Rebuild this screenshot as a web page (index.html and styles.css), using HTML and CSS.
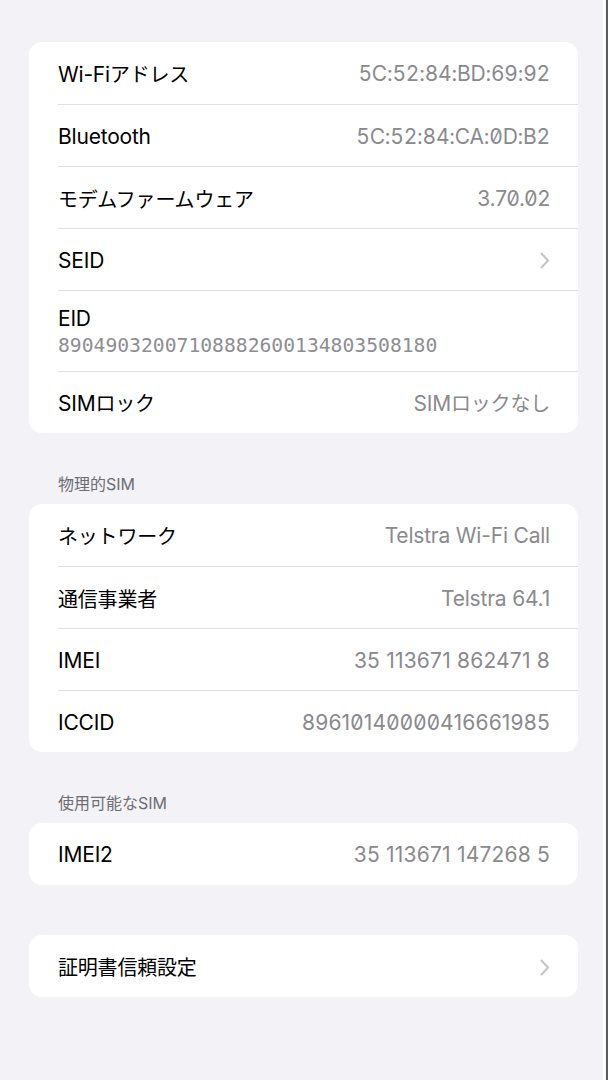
FILE: index.html
```html
<!DOCTYPE html>
<html lang="ja">
<head>
<meta charset="utf-8">
<title>情報</title>
<link rel="stylesheet" href="styles.css">
</head>
<body>
<div class="screen">
  <div class="card">
    <div class="row"><span class="label">Wi-Fi<span class="ja">アドレス</span></span><span class="value mac">5C:52:84:BD:69:92</span></div>
    <div class="row"><span class="label">Bluetooth</span><span class="value mac">5C:52:84:CA:0D:B2</span></div>
    <div class="row"><span class="label ja">モデムファームウェア</span><span class="value num">3.70.02</span></div>
    <div class="row"><span class="label">SEID</span>
      <svg class="chev" width="10" height="17" viewBox="0 0 10 17"><path d="M1.5 1.5 L8 8.5 L1.5 15.5" fill="none" stroke="#c4c4c7" stroke-width="2" stroke-linecap="round" stroke-linejoin="round"/></svg>
    </div>
    <div class="row tall"><span class="label">EID</span><span class="sub">89049032007108882600134803508180</span></div>
    <div class="row"><span class="label">SIM<span class="ja">ロック</span></span><span class="value">SIM<span class="ja">ロックなし</span></span></div>
  </div>

  <div class="header">物理的SIM</div>
  <div class="card">
    <div class="row"><span class="label ja">ネットワーク</span><span class="value">Telstra Wi-Fi Call</span></div>
    <div class="row"><span class="label ja">通信事業者</span><span class="value">Telstra 64.1</span></div>
    <div class="row"><span class="label">IMEI</span><span class="value wide">35 113671 862471 8</span></div>
    <div class="row"><span class="label">ICCID</span><span class="value num wide">89610140000416661985</span></div>
  </div>

  <div class="header">使用可能なSIM</div>
  <div class="card">
    <div class="row"><span class="label">IMEI2</span><span class="value wide">35 113671 147268 5</span></div>
  </div>

  <div class="card spaced">
    <div class="row"><span class="label ja">証明書信頼設定</span>
      <svg class="chev" width="10" height="17" viewBox="0 0 10 17"><path d="M1.5 1.5 L8 8.5 L1.5 15.5" fill="none" stroke="#c4c4c7" stroke-width="2" stroke-linecap="round" stroke-linejoin="round"/></svg>
    </div>
  </div>
</div>
</body>
</html>
```
FILE: styles.css
```css
html, body {
  margin: 0;
  padding: 0;
}
body {
  background: #f2f2f7;
  font-family: Inter, "Noto Sans CJK JP", sans-serif;
  -webkit-font-smoothing: antialiased;
}
.screen {
  width: 608px;
  height: 1080px;
  box-sizing: border-box;
  padding: 42px 28px 0 29px;
  background: #f2f2f7;
  border-right: 2px solid #5c5c60;
  box-shadow: inset -1px 0 0 #f7f7fa, inset -3px 0 0 #ffffff;
}
.card {
  background: #ffffff;
  border-radius: 13px;
  overflow: hidden;
}
.card.spaced {
  margin-top: 50px;
}
.row {
  display: flex;
  align-items: center;
  justify-content: space-between;
  height: 62px;
  box-sizing: border-box;
  margin-left: 29px;
  padding-right: 28px;
  padding-top: 2px;
  border-top: 1px solid #e0e0e3;
}
.row:first-child {
  border-top: none;
}
.row.tall {
  height: 81px;
  flex-direction: column;
  align-items: flex-start;
  justify-content: flex-start;
  padding-top: 16px;
}
.label {
  font-size: 21px;
  line-height: 24px;
  color: #000000;
  letter-spacing: -0.2px;
}
.value {
  font-size: 21px;
  line-height: 24px;
  color: #8a8a8e;
  letter-spacing: -0.2px;
}
.value.wide {
  letter-spacing: 0.2px;
}
.ja {
  font-family: "Noto Sans CJK JP", sans-serif;
  font-size: 20px;
}
.mac {
  font-feature-settings: "tnum" 1, "zero" 1;
}
.num {
  font-feature-settings: "zero" 1;
}
.sub {
  margin-top: 4px;
  font-family: "DejaVu Sans Mono", monospace;
  font-size: 19.7px;
  line-height: 22px;
  color: #8e8e92;
}
.chev {
  display: block;
}
.header {
  padding: 41px 0 10px 29px;
  font-size: 16px;
  line-height: 20px;
  color: #6d6d72;
}
```
